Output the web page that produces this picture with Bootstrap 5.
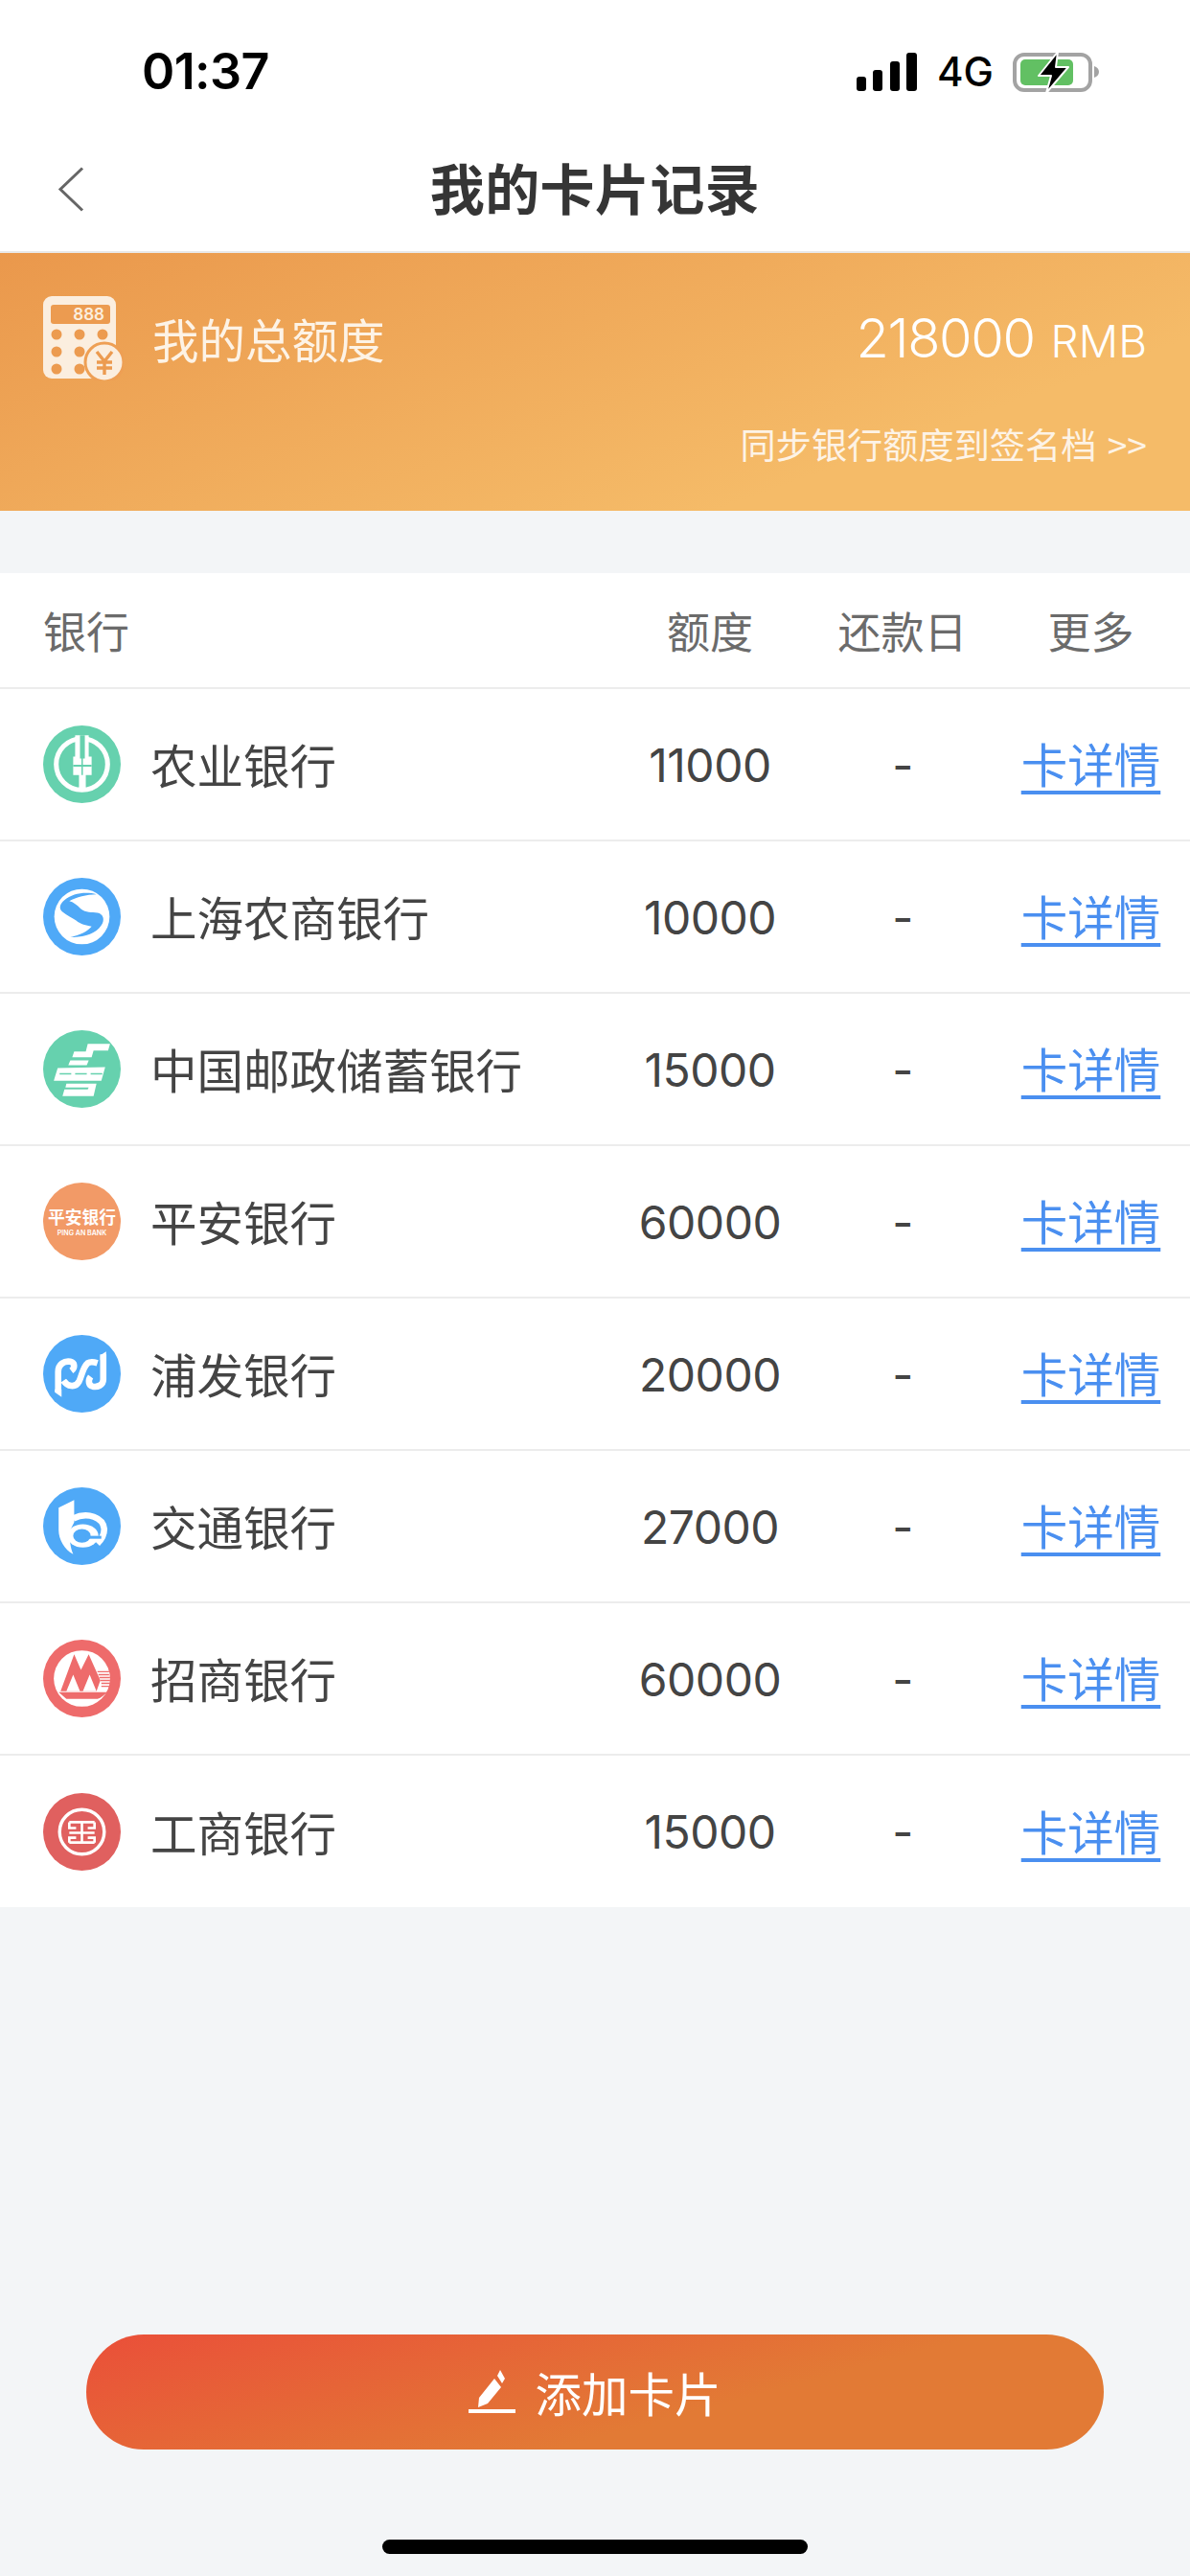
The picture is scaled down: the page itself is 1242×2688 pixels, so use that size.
<!DOCTYPE html>
<html lang="zh-CN">
<head>
  <meta charset="UTF-8" />
  <meta name="viewport" content="width=device-width, initial-scale=1.0" />
  <title>我的卡片记录</title>
  <link href="https://cdn.jsdelivr.net/npm/bootstrap@5.3.0/dist/css/bootstrap.min.css" rel="stylesheet" />
  <style>
    body { background: #f3f5f7; font-family: Inter, "Noto Sans CJK SC", sans-serif; color: #444; }
    .screen { min-height: 2688px; }
    .status-top { height: 134px; padding: 53px 95px 0 148px; background: #fff; }
    .clock { font: 600 52px/40px Inter, sans-serif; color: #000; letter-spacing: -0.6px; margin-top: 2px; }
    .net-label { font: 500 42px/40px Inter, sans-serif; color: #000; margin: 0 20px 0 21px; }
    .nav-top { height: 130px; background: #fff; border-bottom: 2px solid #e9e9e9; padding-bottom: 2px; }
    .nav-side { flex: 1 1 0; padding-left: 60px; }
    .nav-title { font: 700 57px/1 "Noto Sans CJK SC", sans-serif; color: #353535; letter-spacing: 0.4px; margin-bottom: 6px; }
    .quota-panel { height: 269px; padding: 45px 45px 0 45px; color: #fff; background: linear-gradient(160deg, #ea984c 0%, #f5bb68 75%); }
    .quota-label { font: 400 48.5px/1 "Noto Sans CJK SC", sans-serif; margin-left: 30px; color: #fdf3e6; }
    .quota-amount { font: 300 56px/1 Inter, sans-serif; letter-spacing: -1.4px; }
    .quota-unit { font-size: 46px; letter-spacing: 0; margin-left: 4px; }
    .quota-sync { font: 400 37.2px/1 "Noto Sans CJK SC", sans-serif; word-spacing: 3px; margin-top: 48px; color: #fdf3e6; text-decoration: none; }
    .bank-table { margin-top: 65px; margin-bottom: 0; table-layout: fixed; background: #fff; }
    .bank-table th, .bank-table td { background: #fff; padding: 0; vertical-align: middle; border-bottom: 2px solid #ececec; color: #444; }
    .bank-table thead th { height: 120px; font: 400 45px/1 "Noto Sans CJK SC", sans-serif; color: #6b6b6b; }
    .bank-table tbody tr { height: 159px; }
    .bank-table tbody tr:last-child td { border-bottom: 0; }
    .col-bank { width: 629px; padding-left: 45px !important; }
    .col-amount { width: 224px; }
    .col-due { width: 178px; }
    .bank-table .col-more { padding-left: 4px; }
    .bank-name { font: 400 48.5px/1 "Noto Sans CJK SC", sans-serif; margin-left: 31px; }
    .amount-text { display: inline-block; padding-top: 2px; font: 400 48px/1 Inter, sans-serif; letter-spacing: -0.5px; }
    .detail-link { font: 400 48.5px/1 "Noto Sans CJK SC", sans-serif; color: #4a8ff0; text-underline-offset: 8px; }
    .bank-logo { width: 81px; height: 81px; flex: none; }
    .add-card { width: 1062px; height: 120px; border: 0; border-radius: 60px; font: 400 48.5px/1 "Noto Sans CJK SC", sans-serif; color: #fff; background: linear-gradient(165deg, #ea4f39 0%, #e27a35 62%); }
    .add-card:hover, .add-card:active { color: #fff; background: linear-gradient(165deg, #ea4f39 0%, #e27a35 62%) !important; }
    .add-card svg { margin-right: 20px; }
    .home-bar { width: 444px; height: 15px; border-radius: 8px; background: #000; margin: 94px auto 23px; }
  </style>
</head>
<body>
  <div class="screen d-flex flex-column">

    <div class="status-top d-flex justify-content-between align-items-start">
      <span class="clock">01:37</span>
      <div class="d-flex align-items-center">
        <svg width="63" height="40" viewBox="0 0 63 40" fill="#000">
          <rect x="0" y="25" width="10" height="15" rx="3" />
          <rect x="17" y="18" width="10" height="22" rx="3" />
          <rect x="35" y="9" width="10" height="31" rx="3" />
          <rect x="52" y="0" width="11" height="40" rx="3" />
        </svg>
        <span class="net-label">4G</span>
        <svg width="90" height="44" viewBox="0 0 90 44">
          <rect x="2" y="4" width="79" height="37" rx="10" fill="none" stroke="#a3a3a3" stroke-width="4" />
          <rect x="8" y="9" width="55" height="27" rx="5" fill="#62c063" />
          <path d="M85 16 C88 17 90 19 90 22 C90 25 88 27 85 28 Z" fill="#a3a3a3" />
          <path d="M47 1 L27 26 L40 26 L35 44 L58 17 L45 17 Z" fill="#000" stroke="#fff" stroke-width="2" stroke-linejoin="round" />
        </svg>
      </div>
    </div>

    <div class="nav-top d-flex align-items-center">
      <div class="nav-side">
        <svg width="28" height="47" viewBox="0 0 28 47" fill="none"><path d="M26 1.5 L3 23.5 L26 45.5" stroke="#666" stroke-width="3" /></svg>
      </div>
      <div class="nav-title">我的卡片记录</div>
      <div class="nav-side"></div>
    </div>

    <div class="quota-panel">
      <div class="d-flex align-items-center">
        <svg width="84" height="88" viewBox="0 0 84 88">
          <rect x="0" y="0" width="76" height="86" rx="9" fill="#fbeedf" />
          <rect x="8" y="9" width="62" height="20" rx="3" fill="#ec9b50" />
          <text x="64" y="25" text-anchor="end" font-family="Inter, sans-serif" font-size="17" font-weight="600" fill="#fbeedf">888</text>
          <g fill="#ec9b50">
            <circle cx="14" cy="40" r="5.5" /><circle cx="38" cy="40" r="5.5" /><circle cx="62" cy="40" r="5.5" />
            <circle cx="14" cy="58" r="5.5" /><circle cx="38" cy="58" r="5.5" />
            <circle cx="14" cy="76" r="5.5" /><circle cx="38" cy="76" r="5.5" />
          </g>
          <circle cx="64" cy="69" r="20" fill="#fbeedf" stroke="#ee9f54" stroke-width="3" />
          <path d="M56 58 L64 68 L72 58 M64 68 V82 M56 69 H72 M56 75 H72" fill="none" stroke="#ec9b50" stroke-width="3.4" />
        </svg>
        <span class="quota-label">我的总额度</span>
        <span class="quota-amount ms-auto">218000<span class="quota-unit"> RMB</span></span>
      </div>
      <div class="text-end">
        <a href="#" class="quota-sync d-inline-block">同步银行额度到签名档 &gt;&gt;</a>
      </div>
    </div>

    <table class="table bank-table">
      <thead>
        <tr>
          <th class="col-bank">银行</th>
          <th class="col-amount text-center">额度</th>
          <th class="col-due text-center">还款日</th>
          <th class="col-more text-center">更多</th>
        </tr>
      </thead>
      <tbody>
        <tr>
          <td class="col-bank"><div class="d-flex align-items-center">
            <svg class="bank-logo" viewBox="0 0 80 80">
              <circle cx="40" cy="40" r="40" fill="#66d1ae" />
              <circle cx="40" cy="40" r="26.5" fill="none" stroke="#fff" stroke-width="5" />
              <path d="M33 10 H47 V32 H50 V51 H44 V66 H37 V51 H31 V32 H33 Z" fill="#fff" />
              <path d="M38 10 H43 V34 H38 Z M31 40.5 H50 V42.5 H31 Z M39.5 34 H41 V51 H39.5 Z" fill="#66d1ae" />
            </svg>
            <span class="bank-name">农业银行</span>
          </div></td>
          <td class="text-center"><span class="amount-text">11000</span></td>
          <td class="text-center"><span class="amount-text">-</span></td>
          <td class="col-more text-center"><a href="#" class="detail-link">卡详情</a></td>
        </tr>
        <tr>
          <td class="col-bank"><div class="d-flex align-items-center">
            <svg class="bank-logo" viewBox="0 0 80 80">
              <circle cx="40" cy="40" r="40" fill="#4fa9f7" />
              <circle cx="40" cy="40" r="28.5" fill="#fff" />
              <path d="M55 17 C44 14 30 16 22 23 C17 27 16 32 20 35 C25 39 30 41 34 44 C39 48 44 49 50 50 C46 55 38 59 28 61 C41 62 54 58 60 49 C64 43 62 37 56 36 C50 35 44 36 39 32 C35 28 31 25 27 24 C34 20 45 17 55 17 Z" fill="#4fa9f7" />
            </svg>
            <span class="bank-name">上海农商银行</span>
          </div></td>
          <td class="text-center"><span class="amount-text">10000</span></td>
          <td class="text-center"><span class="amount-text">-</span></td>
          <td class="col-more text-center"><a href="#" class="detail-link">卡详情</a></td>
        </tr>
        <tr>
          <td class="col-bank"><div class="d-flex align-items-center">
            <svg class="bank-logo" viewBox="0 0 80 80">
              <circle cx="40" cy="40" r="40" fill="#66d1ae" />
              <g fill="#fff">
                <polygon points="46,14 69,14 67,21 52,21 50,28 30,28 32,22 44,22" />
                <polygon points="28,31 47,31 45,36 26,36" />
                <polygon points="15,39 64,38 60,52 11,52" />
                <polygon points="24,55 55,55 52,68 20,68 22,61 46,61 47,59 23,59" />
              </g>
              <path d="M17 45 H29 M33 45 H45 M49 45 H61" stroke="#66d1ae" stroke-width="1.6" />
            </svg>
            <span class="bank-name">中国邮政储蓄银行</span>
          </div></td>
          <td class="text-center"><span class="amount-text">15000</span></td>
          <td class="text-center"><span class="amount-text">-</span></td>
          <td class="col-more text-center"><a href="#" class="detail-link">卡详情</a></td>
        </tr>
        <tr>
          <td class="col-bank"><div class="d-flex align-items-center">
            <svg class="bank-logo" viewBox="0 0 80 80">
              <circle cx="40" cy="40" r="40" fill="#f29a67" />
              <text x="40" y="42" text-anchor="middle" font-family="'Noto Sans CJK SC', sans-serif" font-size="17.5" font-weight="700" fill="#fff">平安银行</text>
              <text x="40" y="54" text-anchor="middle" font-family="Inter, sans-serif" font-size="7" font-weight="600" fill="#fff">PING AN BANK</text>
            </svg>
            <span class="bank-name">平安银行</span>
          </div></td>
          <td class="text-center"><span class="amount-text">60000</span></td>
          <td class="text-center"><span class="amount-text">-</span></td>
          <td class="col-more text-center"><a href="#" class="detail-link">卡详情</a></td>
        </tr>
        <tr>
          <td class="col-bank"><div class="d-flex align-items-center">
            <svg class="bank-logo" viewBox="0 0 80 80">
              <circle cx="40" cy="40" r="40" fill="#4fa9f7" />
              <g fill="none" stroke="#fff" stroke-width="6.5">
                <path d="M15.5 58 V38 C15.5 30 22 26.5 28 27.5 C33 28.5 33 34 29 37" />
                <path d="M21 47 C25 53 33 55 37 48 C40 42 41 33 46 29 C49 27 53 28 56 29" />
                <path d="M62 20 V46 C62 52 56 54 51 53 C47 52 46 47 49 43" />
              </g>
              <polygon points="12,56 19,56 19,64 12,59" fill="#fff" />
              <polygon points="59,21 65,17 65,26 59,26" fill="#fff" />
            </svg>
            <span class="bank-name">浦发银行</span>
          </div></td>
          <td class="text-center"><span class="amount-text">20000</span></td>
          <td class="text-center"><span class="amount-text">-</span></td>
          <td class="col-more text-center"><a href="#" class="detail-link">卡详情</a></td>
        </tr>
        <tr>
          <td class="col-bank"><div class="d-flex align-items-center">
            <svg class="bank-logo" viewBox="0 0 80 80">
              <circle cx="40" cy="40" r="40" fill="#4fa9f7" />
              <path d="M16 21 L32 13 V36 L28 44 C27 54 28 62 31 69 C22 64 16 54 16 44 Z" fill="#fff" />
              <path d="M31 32 C46 25 62 31 63 43 C63 50 60 54 56 58" fill="none" stroke="#fff" stroke-width="6.5" />
              <ellipse cx="41" cy="50" rx="16" ry="12" fill="#fff" />
              <ellipse cx="40" cy="50" rx="9" ry="7" fill="#4fa9f7" />
              <path d="M44 50 H60 V53 H44 Z" fill="#4fa9f7" />
            </svg>
            <span class="bank-name">交通银行</span>
          </div></td>
          <td class="text-center"><span class="amount-text">27000</span></td>
          <td class="text-center"><span class="amount-text">-</span></td>
          <td class="col-more text-center"><a href="#" class="detail-link">卡详情</a></td>
        </tr>
        <tr>
          <td class="col-bank"><div class="d-flex align-items-center">
            <svg class="bank-logo" viewBox="0 0 80 80">
              <circle cx="40" cy="40" r="40" fill="#ee6b6b" />
              <circle cx="40" cy="40" r="29" fill="#fff" />
              <path d="M32 15 L39 31 L47 15 L59 42 L55 53 H18 Z" fill="#ee6b6b" />
              <path d="M31 36 L38 53 H24 Z M48 36 L55 53 H41 Z" fill="#fff" />
              <path d="M16 54 H66 C62 58 58 61 55 61 H24 Z" fill="#ee6b6b" />
              <path d="M56 33 H68 M57 36 H68 M58 39 H69 M59 42 H69 M60 45 H69 M60 48 H68" stroke="#ee6b6b" stroke-width="1.4" />
            </svg>
            <span class="bank-name">招商银行</span>
          </div></td>
          <td class="text-center"><span class="amount-text">60000</span></td>
          <td class="text-center"><span class="amount-text">-</span></td>
          <td class="col-more text-center"><a href="#" class="detail-link">卡详情</a></td>
        </tr>
        <tr>
          <td class="col-bank"><div class="d-flex align-items-center">
            <svg class="bank-logo" viewBox="0 0 80 80">
              <circle cx="40" cy="40" r="40" fill="#e0605f" />
              <circle cx="40" cy="40" r="23" fill="none" stroke="#fff" stroke-width="3.4" />
              <path d="M27 30 H53 M27 51 H53 M27 41 H53 M40 30 V51 M27 30 V36 H34 M53 30 V36 H46 M27 51 V46 H34 M53 51 V46 H46" fill="none" stroke="#fff" stroke-width="2.6" />
            </svg>
            <span class="bank-name">工商银行</span>
          </div></td>
          <td class="text-center"><span class="amount-text">15000</span></td>
          <td class="text-center"><span class="amount-text">-</span></td>
          <td class="col-more text-center"><a href="#" class="detail-link">卡详情</a></td>
        </tr>
      </tbody>
    </table>

    <div class="mt-auto text-center">
      <button type="button" class="btn add-card d-inline-flex align-items-center justify-content-center">
        <svg width="49" height="46" viewBox="0 0 49 46" fill="#fff">
          <path d="M33 0 L38 9 L35 14 L30 6 Z M27 9 L34 18 L20 35 L10 39 L11 29 Z" />
          <rect x="0" y="41" width="49" height="4" />
        </svg>
        <span>添加卡片</span>
      </button>
      <div class="home-bar"></div>
    </div>

  </div>

  <script src="https://cdn.jsdelivr.net/npm/bootstrap@5.3.0/dist/js/bootstrap.bundle.min.js"></script>
</body>
</html>
